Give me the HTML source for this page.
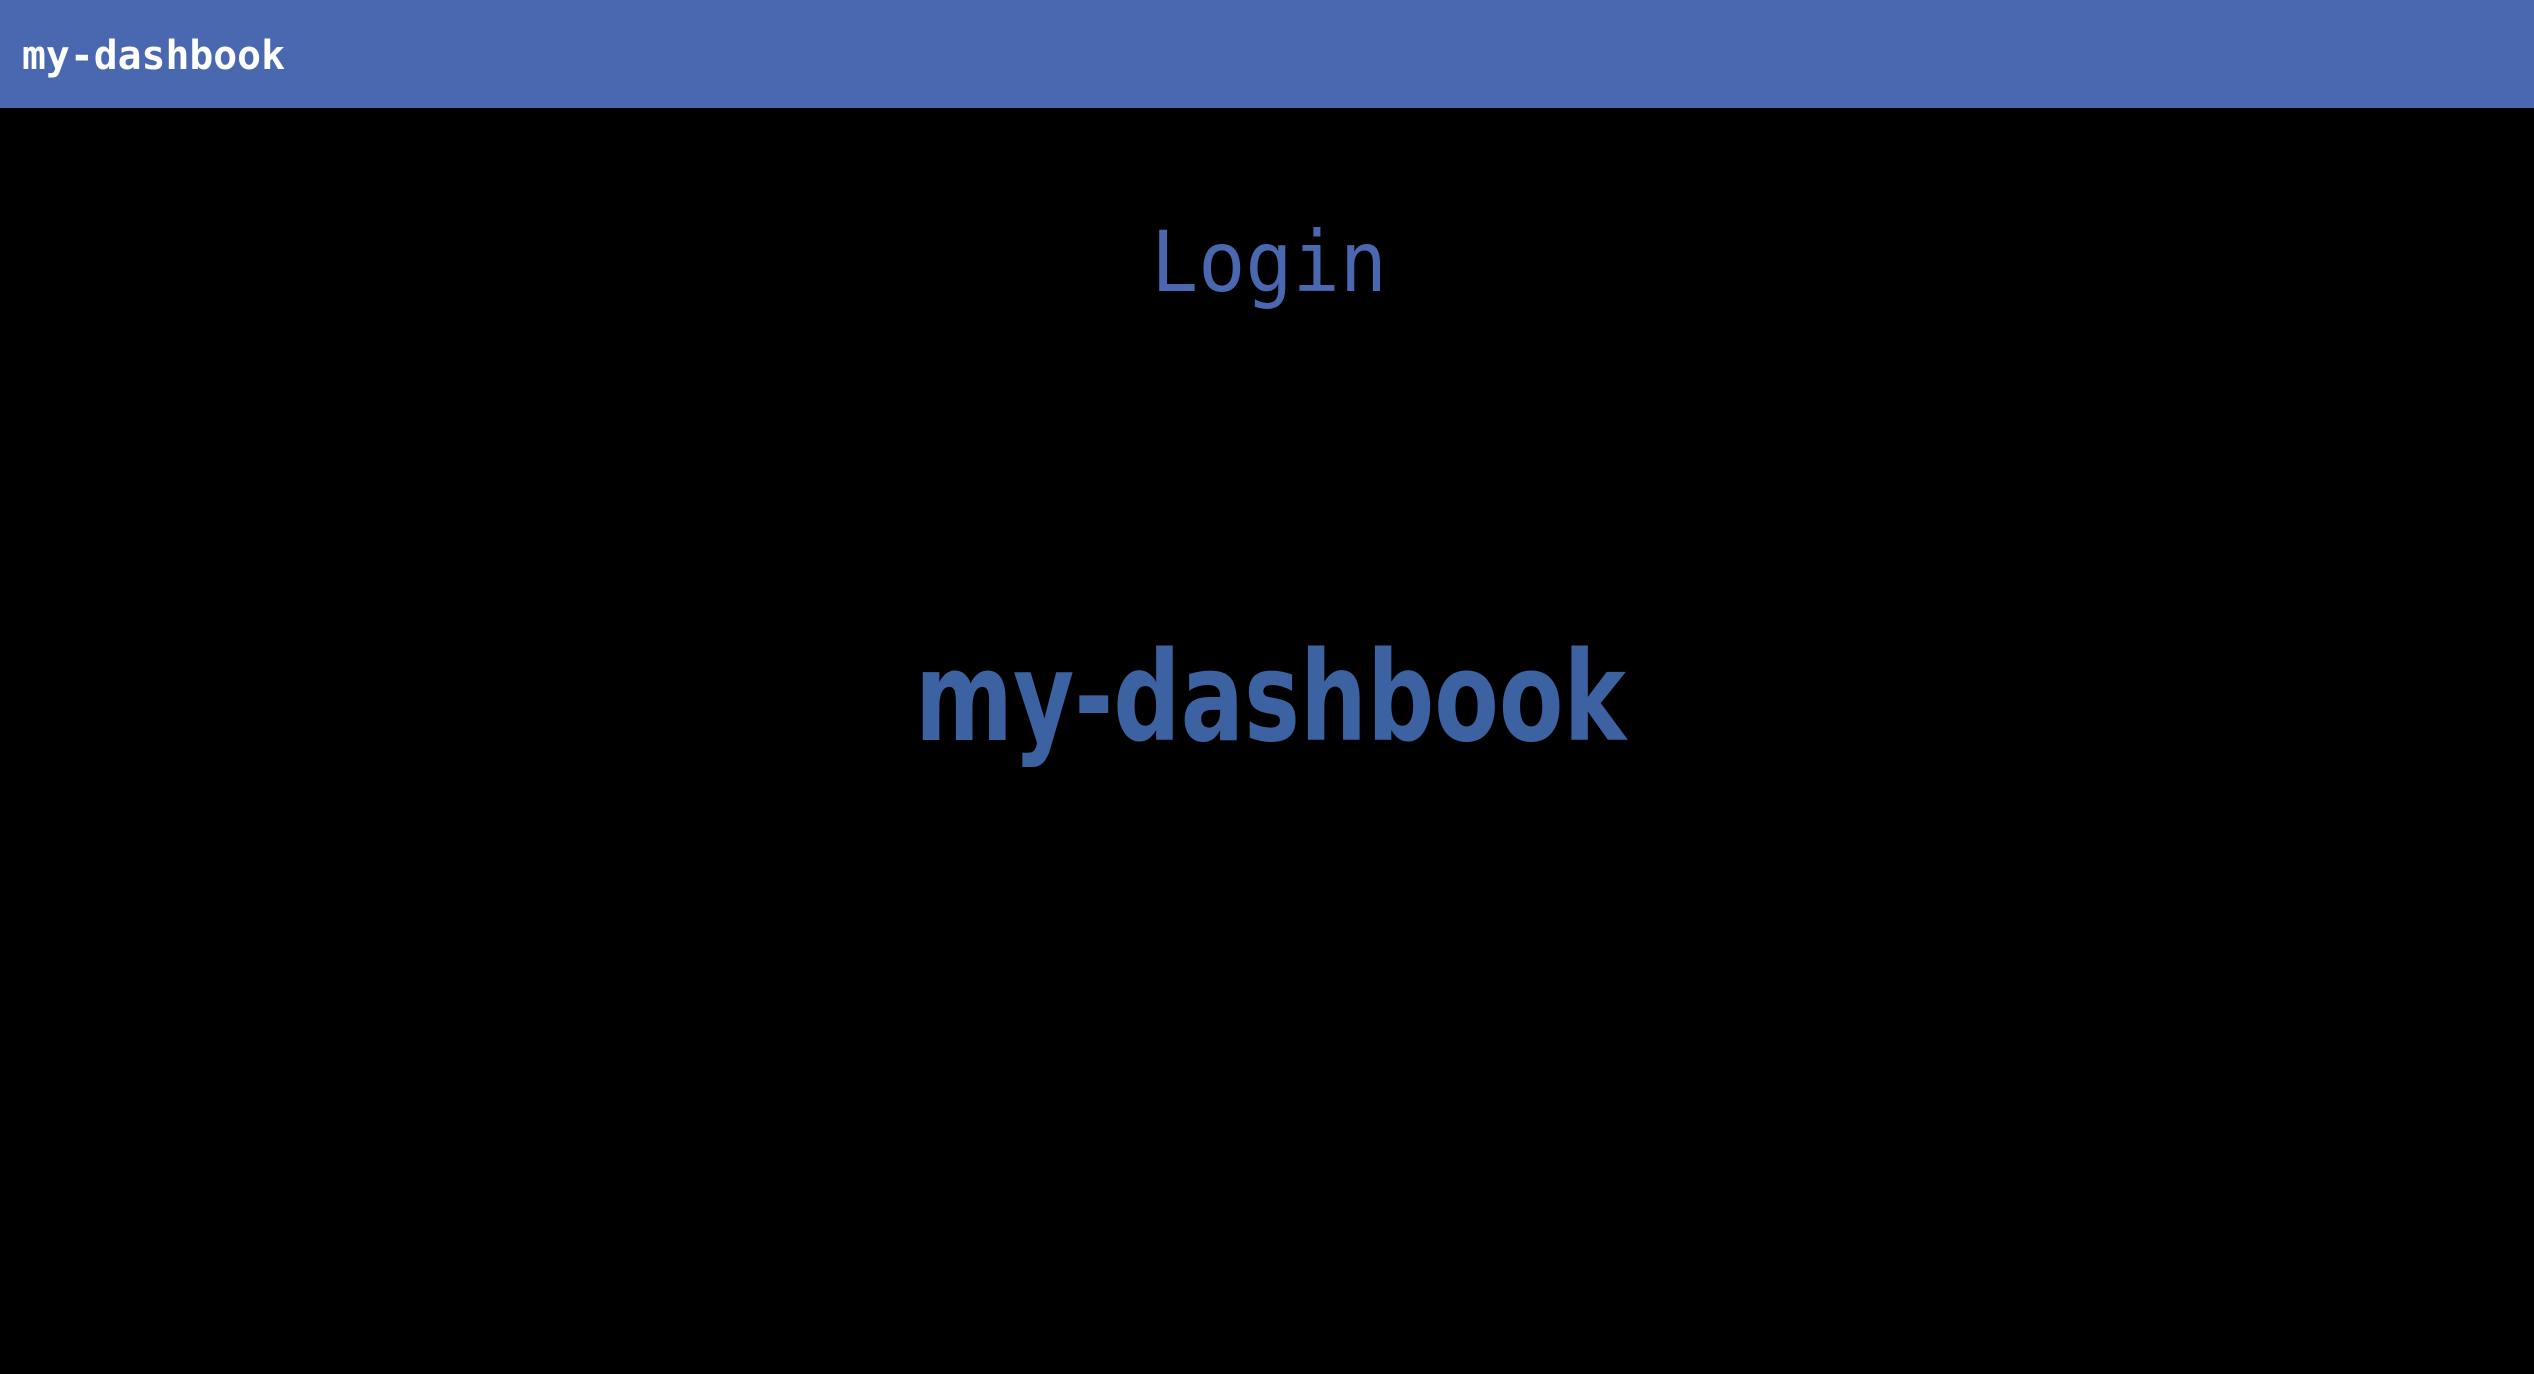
<!DOCTYPE html>
<html><head><meta charset="utf-8"><style>
html,body{margin:0;padding:0;background:#000;width:2534px;height:1374px;overflow:hidden}
.hdr{position:absolute;left:0;top:0;width:2534px;height:108px;background:#4a68b0}
svg{position:absolute;left:0;top:0}
</style></head><body>
<div class="hdr"></div>
<svg width="2534" height="1374" xmlns="http://www.w3.org/2000/svg">
<text x="22" y="69" font-family="DejaVu Sans Mono, Liberation Mono, monospace" font-weight="bold" font-size="40" fill="#fff" textLength="263" lengthAdjust="spacingAndGlyphs">my-dashbook</text>
<text x="1151" y="291" font-family="DejaVu Sans Mono, Liberation Mono, monospace" font-size="84" fill="#4a68b0" textLength="236" lengthAdjust="spacingAndGlyphs">Login</text>
<text x="915" y="740" font-family="DejaVu Sans Condensed, DejaVu Sans, sans-serif" font-weight="bold" font-size="124" fill="#3c62a2" textLength="711" lengthAdjust="spacingAndGlyphs">my-dashbook</text>
</svg>
</body></html>
